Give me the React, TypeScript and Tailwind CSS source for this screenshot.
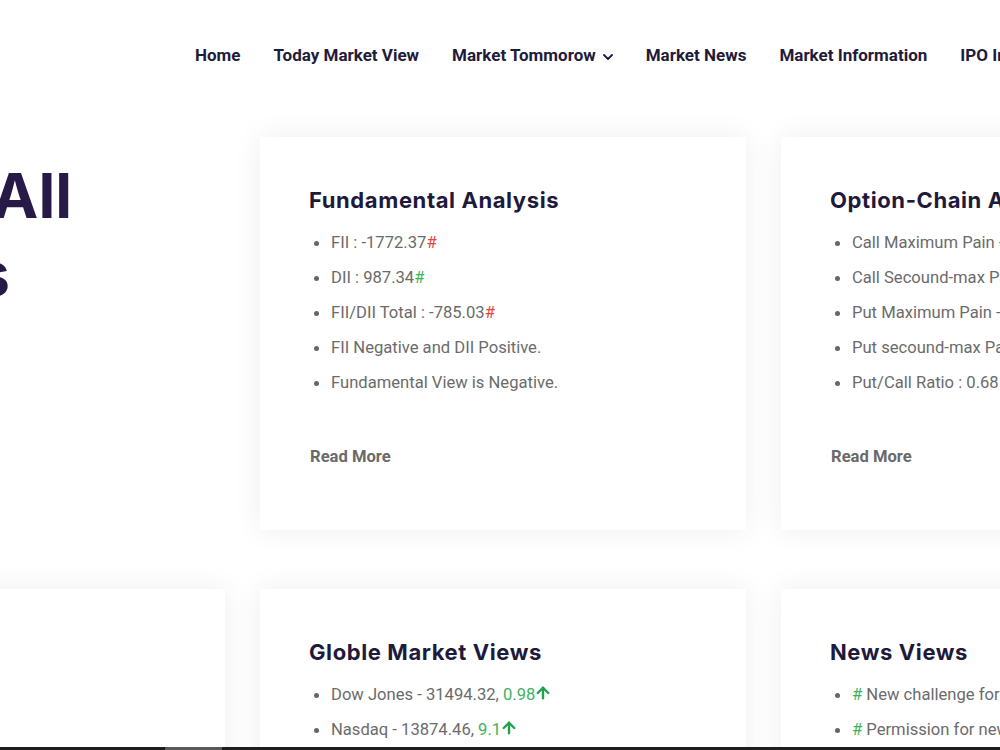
import React from "react";
import { ArrowUp } from "lucide-react";

const body = { fontFamily: "Roboto, 'Liberation Sans', sans-serif" };
const display = { fontFamily: "Inter, 'Open Sans', sans-serif" };

const navItems = [
  { label: "Home" },
  { label: "Today Market View" },
  { label: "Market Tommorow", caret: true },
  { label: "Market News" },
  { label: "Market Information" },
  { label: "IPO Information" },
];

function Caret() {
  return (
    <svg width="10" height="6" viewBox="0 0 10 6" className="mt-[3px]">
      <path d="M1 1l4 4 4-4" fill="none" stroke="currentColor" strokeWidth="1.8" strokeLinecap="round" strokeLinejoin="round" />
    </svg>
  );
}

function Hash({ tone }: { tone: "red" | "green" }) {
  return (
    <span className={tone === "red" ? "text-[#e8453c]" : "text-[#3fb25a]"}>#</span>
  );
}

function Up() {
  return (
    <ArrowUp
      size={18}
      strokeWidth={3.2}
      className="inline-block text-[#22a04b] -mt-[4px] -ml-[1px]"
    />
  );
}

function Card({
  title,
  items,
  readMore = true,
}: {
  title: string;
  items: React.ReactNode[];
  readMore?: boolean;
}) {
  return (
    <div className="bg-white h-[393px] pl-[49px] pt-[48px] shadow-[0_0_28px_rgba(0,0,0,0.07)]">
      <h3
        style={display}
        className="text-[22px] leading-[30px] font-bold text-[#1e1a3c] tracking-[0.6px] whitespace-nowrap"
      >
        {title}
      </h3>
      <ul style={body} className="mt-[16px] flex flex-col gap-[11px]">
        {items.map((it, i) => (
          <li
            key={i}
            className="flex items-center h-[24px] text-[16.6px] text-[#6b6b6b] whitespace-nowrap"
          >
            <span className="ml-[5px] w-[5px] h-[5px] rounded-full bg-[#666] shrink-0" />
            <span className="ml-[12px]">{it}</span>
          </li>
        ))}
      </ul>
      {readMore && (
        <div
          style={body}
          className="mt-[50px] ml-[1px] text-[16.6px] leading-[24px] font-bold text-[#6a6a6a]"
        >
          Read More
        </div>
      )}
    </div>
  );
}

export default function App() {
  return (
    <div className="relative w-[1000px] h-[750px] overflow-hidden bg-white">
      {/* top navigation */}
      <header className="h-[110px] pt-[43px]">
        <nav
          style={body}
          className="flex items-center gap-[33px] pl-[195px] whitespace-nowrap"
        >
          {navItems.map((n) => (
            <a
              key={n.label}
              className="flex items-center gap-[7px] text-[17px] leading-[24px] font-bold text-[#1f1b3a]"
            >
              {n.label}
              {n.caret && <Caret />}
            </a>
          ))}
        </nav>
      </header>

      {/* card grid */}
      <main className="ml-[-261px] mt-[27px] grid grid-cols-[486px_486px_486px] gap-x-[35px] gap-y-[59px]">
        <div className="pt-[20px]">
          <h1
            style={display}
            className="w-[333px] text-right text-[62px] leading-[78px] font-bold text-[#271a47] whitespace-nowrap"
          >
            <span className="block">For All</span>
            <span className="block pr-[62px]">Sectors</span>
          </h1>
        </div>

        <Card
          title="Fundamental Analysis"
          items={[
            <>FII : -1772.37<Hash tone="red" /></>,
            <>DII : 987.34<Hash tone="green" /></>,
            <>FII/DII Total : -785.03<Hash tone="red" /></>,
            "FII Negative and DII Positive.",
            "Fundamental View is Negative.",
          ]}
        />

        <Card
          title="Option-Chain Analysis"
          items={[
            "Call Maximum Pain - 15000",
            "Call Secound-max Pain - 15100",
            "Put Maximum Pain - 14500",
            "Put secound-max Pain - 14600",
            "Put/Call Ratio : 0.68",
          ]}
        />

        <Card title="Sector Analysis" items={[]} readMore={false} />

        <Card
          title="Globle Market Views"
          items={[
            <>Dow Jones - 31494.32, <span className="text-[#43b060]">0.98</span><Up /></>,
            <>Nasdaq - 13874.46, <span className="text-[#43b060]">9.1</span><Up /></>,
            <>S&amp;P 500 - 3841.94, <span className="text-[#43b060]">23.4</span><Up /></>,
          ]}
        />

        <Card
          title="News Views"
          items={[
            <><span className="text-[#3fb25a]">#</span> New challenge for markets</>,
            <><span className="text-[#3fb25a]">#</span> Permission for new listings</>,
          ]}
        />
      </main>

      {/* horizontal scrollbar strip */}
      <div className="absolute left-0 right-0 bottom-0 h-[3px] bg-[#1e1e1e]">
        <div className="absolute left-[165px] w-[57px] top-0 bottom-0 bg-[#5a5a5a]" />
      </div>
    </div>
  );
}
